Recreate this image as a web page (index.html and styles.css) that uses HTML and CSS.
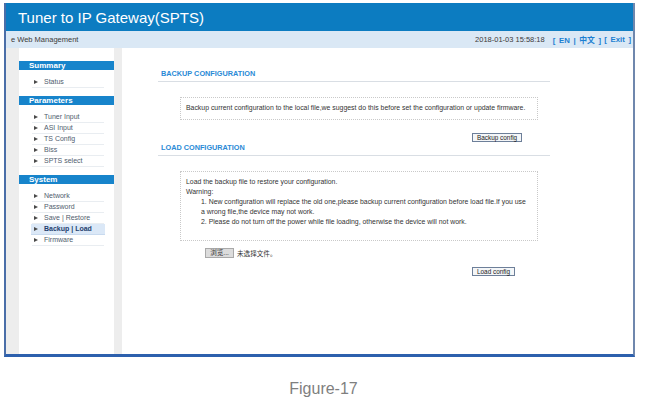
FILE: index.html
```html
<!DOCTYPE html>
<html>
<head>
<meta charset="utf-8">
<link rel="stylesheet" href="styles.css">
</head>
<body>
<div class="frame">
  <div class="topbar"><span class="title">Tuner to IP Gateway(SPTS)</span></div>
  <div class="subbar">
    <span class="crumb">e Web Management</span>
    <span class="right">
      <span class="date">2018-01-03 15:58:18</span>
      <span class="lnk">[ EN | 中文 ]</span>
      <span class="lnk">[ Exit ]</span>
    </span>
  </div>
  <div class="body">
    <div class="sidebar">
      <div class="sec-h">Summary</div>
      <ul class="menu">
        <li>Status</li>
      </ul>
      <div class="sec-h">Parameters</div>
      <ul class="menu">
        <li>Tuner Input</li>
        <li>ASI Input</li>
        <li>TS Config</li>
        <li>Biss</li>
        <li>SPTS select</li>
      </ul>
      <div class="sec-h">System</div>
      <ul class="menu">
        <li>Network</li>
        <li>Password</li>
        <li>Save | Restore</li>
        <li class="active">Backup | Load</li>
        <li>Firmware</li>
      </ul>
    </div>
    <div class="main">
      <div class="section">
        <div class="heading">BACKUP CONFIGURATION</div>
        <div class="box box1"><div>Backup current configuration to the local file,we suggest do this before set the configuration or update firmware.</div></div>
        <div class="btnrow"><span class="btn">Backup config</span></div>
        <div class="heading">LOAD CONFIGURATION</div>
        <div class="box box2">
          <div>Load the backup file to restore your configuration.</div>
          <div>Warning:</div>
          <div class="ind">1. New configuration will replace the old one,please backup current configuration before load file.If you use</div>
          <div class="ind">a wrong file,the device may not work.</div>
          <div class="ind">2. Please do not turn off the power while file loading, otherwise the device will not work.</div>
        </div>
        <div class="filerow"><span class="browse">浏览...</span><span class="nofile">未选择文件。</span></div>
        <div class="btnrow btnrow2"><span class="btn">Load config</span></div>
      </div>
    </div>
  </div>
</div>
<div class="caption">Figure-17</div>
</body>
</html>
```

FILE: styles.css
```css
html, body {
  margin: 0;
  padding: 0;
  background: #ffffff;
  font-family: "Liberation Sans", Arial, "Noto Sans CJK SC", sans-serif;
}

.frame {
  margin: 3px 0 0 4px;
  width: 631px;
  height: 354px;
  box-sizing: border-box;
  border-left: 2px solid #4a6ea8;
  border-right: 2px solid #6f87ad;
  border-bottom: 3px solid #2d60ad;
  display: flex;
  flex-direction: column;
}

.topbar {
  height: 28px;
  background: #0c7cc1;
  display: flex;
  align-items: center;
  padding-left: 12px;
}

.title {
  color: #ffffff;
  font-size: 15px;
  line-height: 15px;
  padding-top: 1px;
}

.subbar {
  height: 17px;
  background: #dae8f5;
  display: flex;
  align-items: center;
  justify-content: space-between;
  padding: 0 2px 0 5px;
  font-size: 7.5px;
  color: #3a3a3a;
}

.right {
  display: flex;
  align-items: center;
  gap: 3px;
}

.date {
  color: #3a3a3a;
  margin-right: 5px;
}

.lnk {
  color: #1b7fd1;
  font-weight: bold;
  font-size: 7.8px;
  word-spacing: 1.5px;
}

.body {
  flex: 1;
  display: flex;
  background: #ededed;
}

.sidebar {
  width: 95px;
  margin: 0 8px 0 13px;
  background: #ffffff;
  padding-top: 13px;
}

.sec-h {
  height: 9px;
  line-height: 9px;
  background: #1784cb;
  color: #ffffff;
  font-weight: bold;
  font-size: 8px;
  padding-left: 10px;
}

.menu {
  list-style: none;
  margin: 0;
  padding: 7px 0 8px 0;
}

.menu li {
  position: relative;
  height: 10px;
  line-height: 10px;
  margin: 0 10px 0 13px;
  padding-left: 12px;
  font-size: 7px;
  color: #4f5d6e;
  border-bottom: 1px solid #e9edf1;
}

.menu li::before {
  content: "";
  position: absolute;
  left: 2px;
  top: 2.5px;
  border-left: 4px solid #4a4a4a;
  border-top: 2.5px solid transparent;
  border-bottom: 2.5px solid transparent;
}

.menu li.active {
  background: #dbe8f7;
  color: #1f3f6e;
  font-weight: bold;
  margin-left: 12px;
  margin-right: 9px;
  padding-left: 13px;
  border-bottom: 1px solid #c8daef;
}

.menu li.active::before {
  left: 3px;
}

.main {
  flex: 1;
  background: #ffffff;
}

.section {
  margin: 21px 0 0 36px;
  width: 392px;
}

.heading {
  font-size: 7.3px;
  line-height: 9px;
  font-weight: bold;
  color: #2a8ad6;
  padding: 0 3px 3px 3px;
  border-bottom: 1px solid #d9dee4;
}

.box {
  margin: 15px 0 0 22px;
  width: 358px;
  box-sizing: border-box;
  border: 1px dotted #c9c9c9;
  font-size: 6.9px;
  line-height: 10px;
  color: #333333;
  padding: 5px 4px 6px 5px;
  white-space: nowrap;
}

.box2 {
  padding-bottom: 13px;
}

.ind {
  padding-left: 15px;
}

.btnrow {
  margin: 13px 0 0 314px;
  height: 10px;
  display: flex;
}

.btnrow2 {
  margin-top: 9px;
}

.btn {
  display: inline-block;
  box-sizing: border-box;
  height: 9px;
  line-height: 7px;
  font-size: 6.4px;
  color: #222222;
  background: #f4f6f8;
  border: 1px solid #6d7f99;
  padding: 0 4px;
}

.filerow {
  margin: 6px 0 0 47px;
  display: flex;
  align-items: center;
  height: 11px;
  font-size: 6.6px;
  color: #333333;
}

.browse {
  display: inline-block;
  box-sizing: border-box;
  width: 29px;
  height: 10px;
  line-height: 8px;
  background: #dcdcdc;
  border: 1px solid #a9a9a9;
  text-align: center;
  margin-right: 3px;
}

.caption {
  text-align: center;
  margin-top: 23px;
  font-size: 16px;
  line-height: 18px;
  color: #7f7f7f;
}
```
